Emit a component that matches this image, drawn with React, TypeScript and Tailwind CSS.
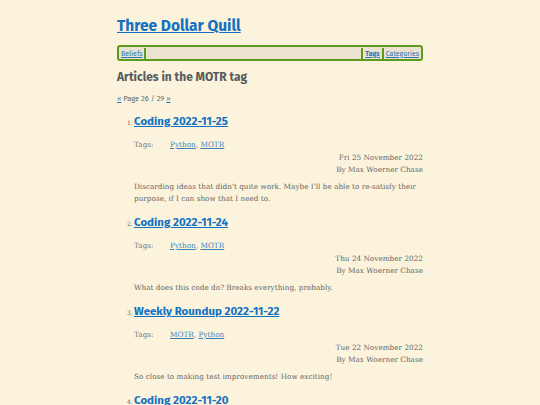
const articles = [
  {
    n: 1,
    title: "Coding 2022-11-25",
    tags: ["Python", "MOTR"],
    date: "Fri 25 November 2022",
    summary: "Discarding ideas that didn't quite work. Maybe I'll be able to re-satisfy their purpose, if I can show that I need to.",
  },
  {
    n: 2,
    title: "Coding 2022-11-24",
    tags: ["Python", "MOTR"],
    date: "Thu 24 November 2022",
    summary: "What does this code do? Breaks everything, probably.",
  },
  {
    n: 3,
    title: "Weekly Roundup 2022-11-22",
    tags: ["MOTR", "Python"],
    date: "Tue 22 November 2022",
    summary: "So close to making test improvements! How exciting!",
  },
  {
    n: 4,
    title: "Coding 2022-11-20",
    tags: ["Python", "MOTR"],
    date: "Sun 20 November 2022",
    summary: "",
  },
];

const sans = "font-['Fira_Sans','Noto_Sans',sans-serif]";
const slab = "font-['DejaVu_Serif',serif]";

export default function App() {
  return (
    <div className={`h-[405px] w-[540px] overflow-hidden bg-[#fbf3dc] ${slab}`}>
      <div className="mx-auto w-[306px] pt-[14px]">
        <h1 className={`${sans} text-[15.5px] leading-[24px] font-bold`}>
          <a href="#" className="text-[#1470c2] underline">Three Dollar Quill</a>
        </h1>
        <nav className="mt-[7px] flex h-[16px] items-center rounded-[3px] border-2 border-[#5e9a1c] bg-[#ebe3cf] px-[2px] text-[7px] leading-none">
          <a href="#" className={`${sans} text-[#2a73b8] underline`}>Beliefs</a>
          <span className="ml-[1px] h-[11px] w-[2px] bg-[#5e9a1c]" />
          <span className="flex-1" />
          <span className="h-[11px] w-[2px] bg-[#5e9a1c]" />
          <a href="#" className={`${sans} mx-[2px] font-bold text-[#2a73b8] underline`}>Tags</a>
          <span className="h-[11px] w-[2px] bg-[#5e9a1c]" />
          <a href="#" className={`${sans} ml-[2px] text-[#2a73b8] underline`}>Categories</a>
        </nav>
        <h2 className={`${sans} mt-[7px] text-[12px] leading-[18px] font-bold text-[#555b5e]`}>
          Articles in the MOTR tag
        </h2>
        <p className={`${sans} mt-[8px] text-[7.5px] leading-[10px] text-[#666]`}>
          <a href="#" className="text-[#2a73b8] underline">«</a> Page 26 / 29{" "}
          <a href="#" className="text-[#2a73b8] underline">»</a>
        </p>
        <ol className="mt-[8px] pl-[17px]">
          {articles.map((a) => (
            <li key={a.n} className="mb-[8px]">
              <div className="flex items-baseline">
                <span className="w-[7px] -ml-[7px] text-[6px] text-[#666]">{a.n}.</span>
                <a href="#" className={`${sans} text-[11.5px] leading-[18px] font-bold text-[#1470c2] underline`}>
                  {a.title}
                </a>
              </div>
              <div className="mt-[10px] flex text-[7.3px] leading-[10px] text-[#777]">
                <span className="w-[36px]">Tags:</span>
                <span>
                  {a.tags.map((t, i) => (
                    <span key={t}>
                      <a href="#" className="text-[#3f7fbf] underline">{t}</a>
                      {i < a.tags.length - 1 ? ", " : ""}
                    </span>
                  ))}
                </span>
              </div>
              <div className="mt-[2px] text-right text-[7.3px] leading-[12px] text-[#666]">
                <div>{a.date}</div>
                <div>By Max Woerner Chase</div>
              </div>
              {a.summary && (
                <p className="mt-[5px] text-[7.3px] leading-[12px] text-[#666]">{a.summary}</p>
              )}
            </li>
          ))}
        </ol>
      </div>
    </div>
  );
}
